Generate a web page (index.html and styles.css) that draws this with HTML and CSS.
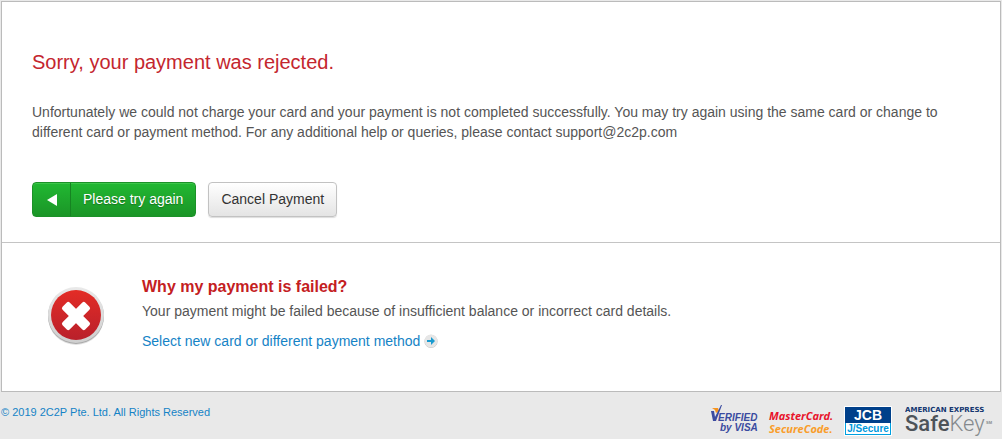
FILE: index.html
```html
<!DOCTYPE html>
<html lang="en">
<head>
    <meta charset="UTF-8">
    <meta name="viewport" content="width=device-width, initial-scale=1.0">
    <title>Payment rejected</title>
    <link rel="stylesheet" href="styles.css">
</head>
<body>
    <main class="panel">
        <section class="message">
            <h1>Sorry, your payment was rejected.</h1>
            <p>Unfortunately we could not charge your card and your payment is not completed successfully. You may try again using the same card or change to different card or payment method. For any additional help or queries, please contact support@2c2p.com</p>
            <div class="actions">
                <button type="button" class="btn btn-retry">
                    <span class="btn-icon">
                        <svg width="12" height="14" viewBox="0 0 12 14"><path d="M1 7 11 1v12z" fill="#fff"/></svg>
                    </span>
                    <span class="btn-label">Please try again</span>
                </button>
                <button type="button" class="btn btn-cancel">Cancel Payment</button>
            </div>
        </section>

        <section class="reason">
            <svg class="reason-icon" width="60" height="60" viewBox="0 0 60 60">
                <defs>
                    <linearGradient id="ring" x1="0" y1="0" x2="0" y2="1">
                        <stop offset="0" stop-color="#e9e9e9"/>
                        <stop offset="1" stop-color="#cfcfcf"/>
                    </linearGradient>
                    <linearGradient id="red" x1="0" y1="0" x2="0" y2="1">
                        <stop offset="0" stop-color="#e32c26"/>
                        <stop offset="1" stop-color="#b9202b"/>
                    </linearGradient>
                </defs>
                <circle cx="30" cy="31" r="28" fill="#000" opacity="0.12"/>
                <circle cx="30" cy="30" r="28" fill="#a9a9a9"/>
                <circle cx="30" cy="29" r="28" fill="url(#ring)"/>
                <circle cx="30" cy="29" r="25" fill="url(#red)"/>
                <g transform="rotate(45 30 30)" fill="#fff">
                    <rect x="14" y="25" width="32" height="10" rx="2"/>
                    <rect x="25" y="14" width="10" height="32" rx="2"/>
                </g>
            </svg>
            <div class="reason-text">
                <h2>Why my payment is failed?</h2>
                <p>Your payment might be failed because of insufficient balance or incorrect card details.</p>
                <a href="#">Select new card or different payment method
                    <svg class="arrow" width="14" height="14" viewBox="0 0 14 14">
                        <circle cx="7" cy="7.400" r="6.600" fill="#c4c4c4"/>
                        <circle cx="7" cy="7" r="6.500" fill="#e6e6e6"/>
                        <path d="M3 6h4V3L11 7 7 11V8H3z" fill="#1a9bd0"/>
                    </svg>
                </a>
            </div>
        </section>
    </main>

    <footer class="footer">
        <a href="#" class="copyright">© 2019 2C2P Pte. Ltd. All Rights Reserved</a>
        <div class="logos">
            <svg width="50" height="30" viewBox="0 0 50 30" class="logo-visa">
                <path d="M2 2h6l1 3-3 2-1-3z" fill="#f7941d"/>
                <path d="M1 5h3l1 6 6-12h1L6 15H3z" fill="#3a4ba0"/>
                <text x="8" y="15">ERIFIED</text>
                <text x="10" y="25">by VISA</text>
            </svg>
            <svg width="66" height="30" viewBox="0 0 66 30" class="logo-mastercard">
                <text x="0" y="14" fill="#e8132b">MasterCard.</text>
                <text x="0" y="27" fill="#f99d2a">SecureCode.</text>
            </svg>
            <svg width="48" height="30" viewBox="0 0 48 30" class="logo-jcb">
                <rect width="48" height="30" rx="1" fill="#fff"/>
                <rect x="1" y="1" width="46" height="28" fill="#00a0e0"/>
                <rect x="1" y="1" width="46" height="16" fill="#00408a"/>
                <rect x="2" y="17" width="44" height="11" fill="#fff"/>
                <text x="24" y="14" font-size="14" fill="#fff">JCB</text>
                <text x="24" y="26" font-size="10" fill="#0098dc">J/Secure</text>
            </svg>
            <svg width="90" height="32" viewBox="0 0 90 32" class="logo-amex">
                <text x="0" y="6" class="amex-name">AMERICAN EXPRESS</text>
                <text x="0" y="25" class="safe">Safe<tspan class="key">Key</tspan></text>
                <text x="81" y="18" class="mark">SM</text>
            </svg>
        </div>
    </footer>
</body>
</html>
```

FILE: styles.css
```css
body {
    margin: 0;
    padding: 1px;
    background-color: #e9e9e9;
    font-family: "Liberation Sans", Arial, sans-serif;
    font-size: 14px;
    line-height: 20px;
    color: #555;
}
h1, h2, p {
    margin: 0;
}
a {
    color: #1583c6;
    text-decoration: none;
}
.panel {
    background-color: #fff;
    border: 1px solid #bbb;
}
.message {
    padding: 46px 30px 25px;
    border-bottom: 1px solid #c4c4c4;
}
h1 {
    margin-bottom: 26px;
    font-size: 20px;
    font-weight: normal;
    line-height: 28px;
    color: #c4262e;
}
.actions {
    display: flex;
    gap: 12px;
    margin-top: 40px;
}
.btn {
    height: 35px;
    border-radius: 4px;
    font-family: inherit;
    font-size: 14px;
    cursor: pointer;
}
.btn-retry {
    display: flex;
    padding: 0;
    border: 1px solid #1c9128;
    background: linear-gradient(#21b832, #1b9527);
    box-shadow: inset 0 1px 0 #3cc64a;
    color: #fff;
}
.btn-icon {
    display: flex;
    align-items: center;
    justify-content: center;
    width: 37px;
    height: 33px;
    border-right: 1px solid #168322;
}
.btn-label {
    padding: 0 12px;
    line-height: 33px;
    text-shadow: 0 1px 1px #14751e;
}
.btn-cancel {
    padding: 0 12px 2px;
    border: 1px solid #c2c2c2;
    background: linear-gradient(#fff, #e4e4e4);
    box-shadow: 0 1px 1px #ddd;
    color: #333;
}
.reason {
    display: flex;
    gap: 36px;
    padding: 32px 30px 40px 44px;
}
.reason-icon {
    flex: none;
    margin-top: 11px;
}
h2 {
    margin-bottom: 2px;
    font-size: 16px;
    line-height: 24px;
    color: #c4201f;
}
.reason-text p {
    margin-bottom: 10px;
}
.arrow {
    vertical-align: -2px;
}
.footer {
    display: flex;
    justify-content: space-between;
    padding: 10px 6px 0 0;
}
.copyright {
    font-size: 11px;
}
.logos {
    display: flex;
    gap: 9px;
    padding-top: 4px;
    font-weight: bold;
}
.logo-visa {
    overflow: visible;
    font-size: 10px;
    font-style: italic;
    fill: #3a4ba0;
}
.logo-mastercard {
    overflow: visible;
    font-family: "Open Sans", sans-serif;
    font-size: 11px;
    font-style: italic;
}
.logo-jcb {
    margin-right: 4px;
    text-anchor: middle;
}
.amex-name {
    font-family: "DejaVu Sans", sans-serif;
    font-size: 7px;
    fill: #12356f;
}
.safe {
    font-family: Roboto, sans-serif;
    font-size: 22px;
    font-weight: 500;
    fill: #4d5359;
}
.key {
    font-weight: 300;
    fill: #85898d;
}
.mark {
    font-size: 4px;
    fill: #85898d;
}
```
